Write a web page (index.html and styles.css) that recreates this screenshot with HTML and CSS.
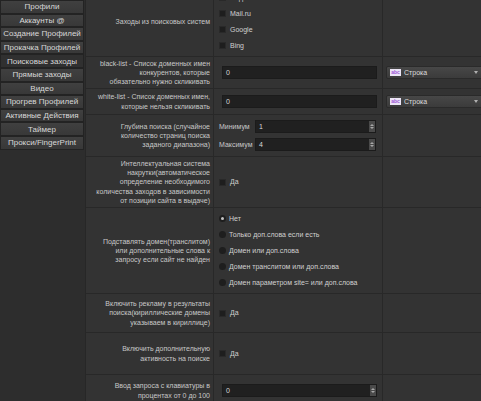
FILE: index.html
```html
<!DOCTYPE html>
<html lang="ru">

<head>
    <meta charset="UTF-8">
    <meta name="viewport" content="width=device-width, initial-scale=1.0">
    <title>Поисковые заходы</title>
    <link rel="stylesheet" href="styles.css">
</head>

<body>
    <div class="app">
        <nav class="sidebar">
            <button class="nav-btn">Профили</button>
            <button class="nav-btn">Аккаунты @</button>
            <button class="nav-btn">Создание Профилей</button>
            <button class="nav-btn">Прокачка Профилей</button>
            <button class="nav-btn active">Поисковые заходы</button>
            <button class="nav-btn">Прямые заходы</button>
            <button class="nav-btn">Видео</button>
            <button class="nav-btn">Прогрев Профилей</button>
            <button class="nav-btn">Активные Действия</button>
            <button class="nav-btn">Таймер</button>
            <button class="nav-btn">Прокси/FingerPrint</button>
        </nav>

        <main class="main">
            <div class="form">
                <div class="row row-engines">
                    <div class="cell label">Заходы из поисковых систем</div>
                    <div class="cell value">
                        <div class="list">
                            <label class="check"><span class="box"></span>Яндекс</label>
                            <label class="check"><span class="box"></span>Mail.ru</label>
                            <label class="check"><span class="box"></span>Google</label>
                            <label class="check"><span class="box"></span>Bing</label>
                        </div>
                    </div>
                    <div class="cell extra"></div>
                </div>

                <div class="row row-black">
                    <div class="cell label">black-list - Список доменных имен<br>конкурентов, которые<br>обязательно нужно скликивать</div>
                    <div class="cell value">
                        <div class="field wide"><span class="field-text">0</span></div>
                    </div>
                    <div class="cell extra">
                        <div class="combo">
                            <span class="abc">abc</span>
                            <span class="combo-text">Строка</span>
                            <span class="combo-arrow"></span>
                        </div>
                    </div>
                </div>

                <div class="row row-white">
                    <div class="cell label">white-list - Список доменных имен,<br>которые нельзя скликивать</div>
                    <div class="cell value">
                        <div class="field wide"><span class="field-text">0</span></div>
                    </div>
                    <div class="cell extra">
                        <div class="combo">
                            <span class="abc">abc</span>
                            <span class="combo-text">Строка</span>
                            <span class="combo-arrow"></span>
                        </div>
                    </div>
                </div>

                <div class="row row-depth">
                    <div class="cell label">Глубина поиска (случайное<br>количество страниц поиска<br>заданого диапазона)</div>
                    <div class="cell value">
                        <div class="range">
                            <div class="range-item">
                                <span class="range-label">Минимум</span>
                                <div class="field spin short"><span class="field-text">1</span><span class="spin-btns"><i class="up"></i><i class="down"></i></span></div>
                            </div>
                            <div class="range-item">
                                <span class="range-label">Максимум</span>
                                <div class="field spin short"><span class="field-text">4</span><span class="spin-btns"><i class="up"></i><i class="down"></i></span></div>
                            </div>
                        </div>
                    </div>
                    <div class="cell extra"></div>
                </div>

                <div class="row row-smart">
                    <div class="cell label">Интеллектуальная система<br>накрутки(автоматическое<br>определение необходимого<br>количества заходов в зависимости<br>от позиции сайта в выдаче)</div>
                    <div class="cell value">
                        <label class="check"><span class="box"></span>Да</label>
                    </div>
                    <div class="cell extra"></div>
                </div>

                <div class="row row-domain">
                    <div class="cell label">Подставлять домен(транслитом)<br>или дополнительные слова к<br>запросу если сайт не найден</div>
                    <div class="cell value">
                        <div class="list">
                            <label class="radio"><span class="dot checked"></span>Нет</label>
                            <label class="radio"><span class="dot"></span>Только доп.слова если есть</label>
                            <label class="radio"><span class="dot"></span>Домен или доп.слова</label>
                            <label class="radio"><span class="dot"></span>Домен транслитом или доп.слова</label>
                            <label class="radio"><span class="dot"></span>Домен параметром site= или доп.слова</label>
                        </div>
                    </div>
                    <div class="cell extra"></div>
                </div>

                <div class="row row-ads">
                    <div class="cell label">Включить рекламу в результаты<br>поиска(кириллические домены<br>указываем в кириллице)</div>
                    <div class="cell value">
                        <label class="check"><span class="box"></span>Да</label>
                    </div>
                    <div class="cell extra"></div>
                </div>

                <div class="row row-activity">
                    <div class="cell label">Включить дополнительную<br>активность на поиске</div>
                    <div class="cell value">
                        <label class="check"><span class="box"></span>Да</label>
                    </div>
                    <div class="cell extra"></div>
                </div>

                <div class="row row-typing">
                    <div class="cell label">Ввод запроса с клавиатуры в<br>процентах от 0 до 100</div>
                    <div class="cell value">
                        <div class="field spin wide"><span class="field-text">0</span><span class="spin-btns"><i class="up"></i><i class="down"></i></span></div>
                    </div>
                    <div class="cell extra"></div>
                </div>
            </div>
        </main>
    </div>
</body>

</html>
```

FILE: styles.css
```css
* {
    box-sizing: border-box;
}

body {
    margin: 0;
    background: #2d2d2d;
    font-family: "Liberation Sans", Arial, sans-serif;
    color: #c8c8c8;
    overflow: hidden;
}

.app {
    display: flex;
    width: 481px;
    height: 401px;
    overflow: hidden;
}

/* left menu */
.sidebar {
    width: 85px;
    flex: none;
    display: flex;
    flex-direction: column;
    background: #2d2d2d;
}

.nav-btn {
    width: 84px;
    height: 13.6px;
    margin: 0;
    padding: 0;
    border: 1px solid #232323;
    background: linear-gradient(#404040, #383838);
    color: #d8d8d8;
    font-family: "Liberation Sans", Arial, sans-serif;
    font-size: 8px;
    line-height: 11px;
    text-align: center;
    white-space: nowrap;
}

.nav-btn.active {
    background: #303030;
}

/* form table */
.main {
    flex: 1;
    background: #333333;
    border-left: 1px solid #272727;
    overflow: hidden;
}

.form {
    margin-top: -13px;
}

.row {
    display: grid;
    grid-template-columns: 128px 169px 110px;
    border-bottom: 1px solid #282828;
}

.row-engines { height: 70px; }
.row-black { height: 32px; }
.row-white { height: 26px; }
.row-depth { height: 42px; }
.row-smart { height: 51px; }
.row-domain { height: 86px; }
.row-ads { height: 39px; }
.row-activity { height: 42px; }
.row-typing { height: 32px; }

.cell {
    display: flex;
    align-items: center;
    font-size: 7px;
    line-height: 9.1px;
    white-space: nowrap;
}

.label {
    justify-content: flex-end;
    text-align: right;
    padding-right: 3px;
    border-right: 1px solid #282828;
}

.value {
    padding-left: 5px;
    border-right: 1px solid #282828;
}

.extra {
    padding-left: 3px;
}

.list {
    display: flex;
    flex-direction: column;
}

.check,
.radio {
    display: flex;
    align-items: center;
    height: 16px;
    color: #d0d0d0;
}

.box {
    width: 7px;
    height: 7px;
    margin-right: 4px;
    background: #1e1e1e;
    border: 1px solid #292929;
}

.dot {
    width: 7px;
    height: 7px;
    margin-right: 3px;
    border-radius: 50%;
    background: #1e1e1e;
    display: flex;
    align-items: center;
    justify-content: center;
}

.dot.checked::after {
    content: "";
    width: 3px;
    height: 3px;
    border-radius: 50%;
    background: #c4c4c4;
}

/* inputs */
.field {
    display: flex;
    align-items: center;
    height: 13px;
    background: #202020;
    border: 1px solid #1b1b1b;
    color: #d8d8d8;
}

.field.wide {
    width: 155px;
    margin-left: 3px;
}

.field.short {
    width: 121px;
}

.field-text {
    flex: 1;
    padding-left: 3px;
}

.spin-btns {
    width: 6px;
    height: 100%;
    display: flex;
    flex-direction: column;
    align-items: center;
    justify-content: center;
    gap: 1px;
    background: #4a4a4a;
}

.spin-btns i {
    width: 0;
    height: 0;
    border-left: 2px solid transparent;
    border-right: 2px solid transparent;
}

.spin-btns .up {
    border-bottom: 2px solid #a8a8a8;
}

.spin-btns .down {
    border-top: 2px solid #a8a8a8;
}

.range {
    display: flex;
    flex-direction: column;
    gap: 5px;
}

.range-item {
    display: flex;
    align-items: center;
}

.range-label {
    width: 36px;
}

/* type selector */
.combo {
    display: flex;
    align-items: center;
    width: 98px;
    height: 13px;
    padding: 0 3px;
    background: linear-gradient(#474747, #3b3b3b);
    border: 1px solid #2a2a2a;
    border-radius: 2px;
    color: #dcdcdc;
}

.abc {
    width: 11px;
    height: 7px;
    margin-right: 3px;
    background: #ebe4f5;
    color: #9a52d6;
    font-size: 5px;
    line-height: 7px;
    text-align: center;
    font-weight: bold;
}

.combo-text {
    flex: 1;
}

.combo-arrow {
    width: 0;
    height: 0;
    margin-right: 2px;
    border-left: 2px solid transparent;
    border-right: 2px solid transparent;
    border-top: 3px solid #b0b0b0;
}
```
